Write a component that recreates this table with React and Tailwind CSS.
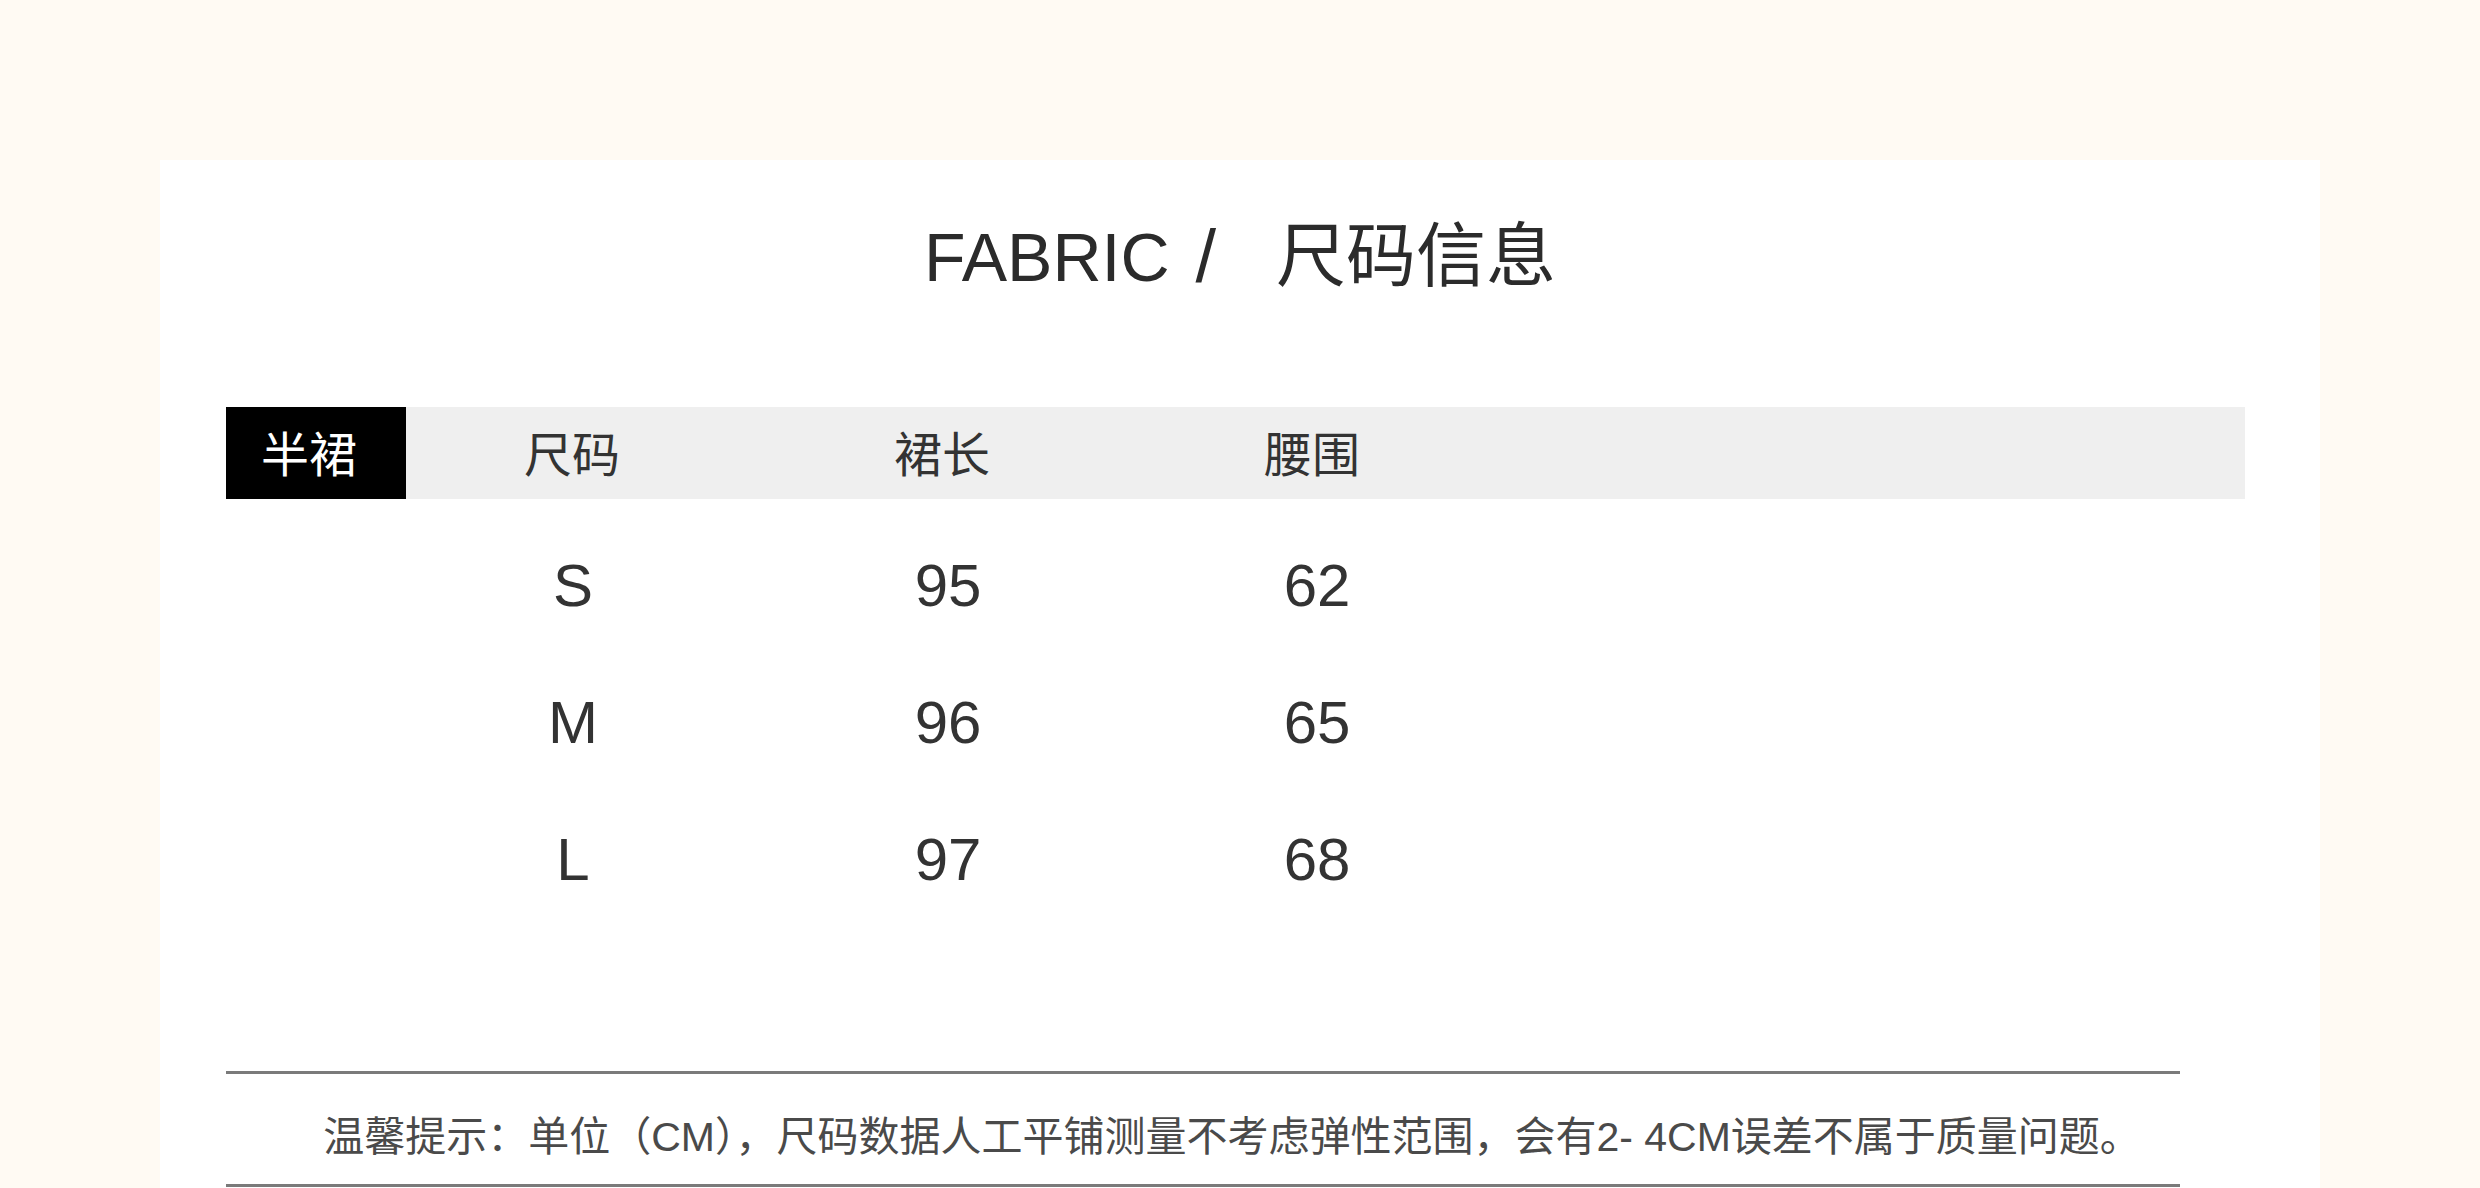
import React from 'react';

const rows = [
  { size: 'S', length: '95', waist: '62' },
  { size: 'M', length: '96', waist: '65' },
  { size: 'L', length: '97', waist: '68' },
];

const font = { fontFamily: '"Liberation Sans", "Noto Sans CJK SC", sans-serif' };

const App = () => {
  return (
    <div className="h-[1188px] overflow-hidden bg-[#fffaf3] pt-[160px] pl-[160px]" style={font}>
      <div className="w-[2160px] h-[1100px] bg-white flex flex-col">
        {/* title */}
        <div className="pt-[60px] flex justify-center items-center text-[68px] leading-none text-[#2b2b2b]">
          <span>FABRIC</span>
          <span className="ml-[26px] text-[74px] font-light">/</span>
          <span className="ml-[60px] text-[70px]">尺码信息</span>
        </div>

        {/* table */}
        <div className="ml-[66px] mt-[113px]">
          <div className="grid grid-cols-[180px_332px_408px_332px_1fr] h-[92px] bg-[#efefef] w-[2019px] text-[48px] text-[#333] leading-none">
            <div className="bg-black text-white flex items-center justify-center pr-[14px] pt-[6px]">半裙</div>
            <div className="flex items-center justify-center pt-[6px]">尺码</div>
            <div className="flex items-center justify-center pt-[6px]">裙长</div>
            <div className="flex items-center justify-center pt-[6px]">腰围</div>
            <div />
          </div>
          <div className="mt-[18px]">
            {rows.map((r) => (
              <div key={r.size} className="grid grid-cols-[180px_332px_408px_332px_1fr] h-[137px] items-center text-[60px] text-[#333] leading-none">
                <div />
                <div className="text-center pl-[2px]">{r.size}</div>
                <div className="text-center pl-[12px]">{r.length}</div>
                <div className="text-center pl-[10px]">{r.waist}</div>
                <div />
              </div>
            ))}
          </div>
        </div>

        {/* note */}
        <div className="mt-[143px] ml-[66px] w-[1954px] border-t-[3px] border-b-[3px] border-[#7a7a7a] pt-[43px] pb-[26px]">
          <p className="text-[41px] leading-none text-[#4a4a4a] text-center pl-[58px] whitespace-nowrap">
            温馨提示：单位（CM），尺码数据人工平铺测量不考虑弹性范围，会有2- 4CM误差不属于质量问题。
          </p>
        </div>
      </div>
    </div>
  );
};

export default App;
